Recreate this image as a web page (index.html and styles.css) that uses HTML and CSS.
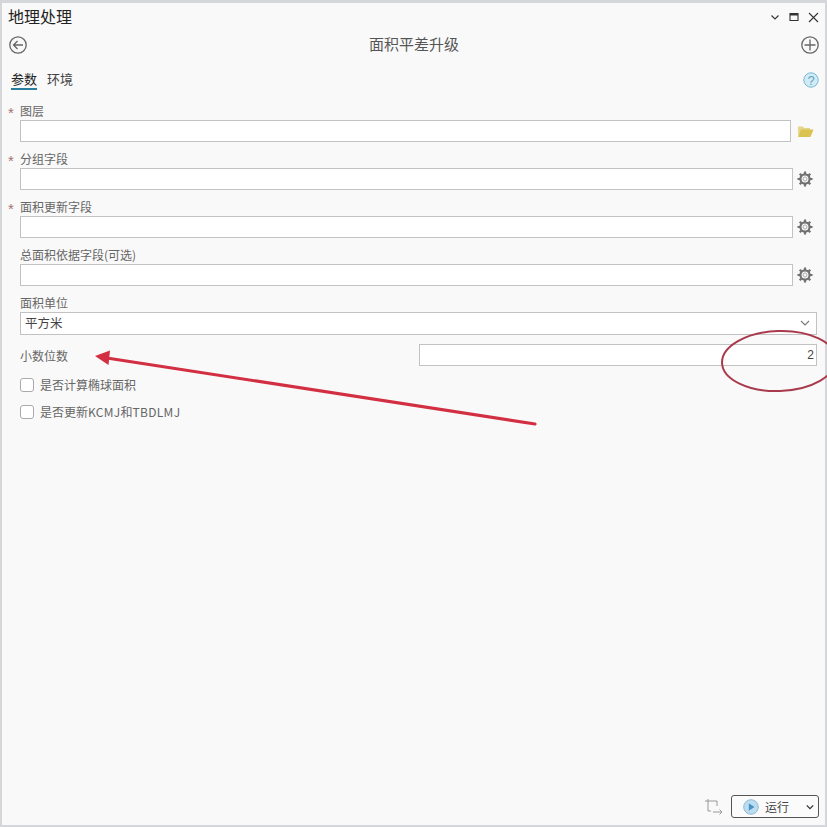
FILE: index.html
```html
<!DOCTYPE html>
<html lang="zh">
<head>
<meta charset="utf-8">
<title>地理处理</title>
<link rel="stylesheet" href="styles.css">
</head>
<body>
<div class="panel">
  <header class="titlebar">
    <span class="title">地理处理</span>
    <div class="winctl">
      <svg width="10" height="10" viewBox="0 0 10 10"><path d="M1.500 3.500 5 7l3.500-3.500" class="st1"/></svg>
      <svg width="10" height="10" viewBox="0 0 10 10"><path d="M1 1.500h8v7H1z" class="st1"/><path d="M1 2.500h8" class="st2"/></svg>
      <svg width="11" height="11" viewBox="0 0 11 11"><path d="M1 1l9 9M10 1l-9 9" class="st1"/></svg>
    </div>
  </header>
  <div class="toolhead">
    <svg width="18" height="18" viewBox="0 0 18 18"><circle cx="9" cy="9" r="8.200" class="st3"/><path d="M14 9H4.500M8.500 5 4.500 9l4 4" class="st3"/></svg>
    <span class="toolname">面积平差升级</span>
    <svg width="18" height="18" viewBox="0 0 18 18"><circle cx="9" cy="9" r="8.200" class="st3"/><path d="M9 3.500v11M3.500 9h11" class="st3"/></svg>
  </div>
  <nav class="tabs">
    <span class="tab active">参数</span>
    <span class="tab">环境</span>
    <svg class="help" width="16" height="16" viewBox="0 0 16 16"><circle cx="8" cy="8" r="7.200" fill="#d3ebf5" stroke="#76b9d6"/><text x="8" y="12.500" class="helpq">?</text></svg>
  </nav>
  <main class="form">
    <div class="field">
      <label class="label req">图层</label>
      <div class="row">
        <div class="input folder-input"></div>
        <svg class="side" width="17" height="14" viewBox="0 0 17 14"><path d="M1 12V2.500h5l1 1.500h6V6H4z" fill="#e6d68c"/><path d="M1 13 3.800 5.500H16.500L13.500 13z" fill="#dcc24f"/></svg>
      </div>
    </div>
    <div class="field">
      <label class="label req">分组字段</label>
      <div class="row">
        <div class="input"></div>
        <svg class="side gear" width="16" height="16" viewBox="0 0 16 16"><use href="#gear"/></svg>
      </div>
    </div>
    <div class="field">
      <label class="label req">面积更新字段</label>
      <div class="row">
        <div class="input"></div>
        <svg class="side gear" width="16" height="16" viewBox="0 0 16 16"><use href="#gear"/></svg>
      </div>
    </div>
    <div class="field">
      <label class="label">总面积依据字段(可选)</label>
      <div class="row">
        <div class="input"></div>
        <svg class="side gear" width="16" height="16" viewBox="0 0 16 16"><use href="#gear"/></svg>
      </div>
    </div>
    <div class="field">
      <label class="label">面积单位</label>
      <div class="input select">
        <span>平方米</span>
        <svg width="10" height="10" viewBox="0 0 10 10"><path d="M1 3l4 4 4-4" class="st4"/></svg>
      </div>
    </div>
    <div class="decimal">
      <label class="dlabel">小数位数</label>
      <div class="input num">2</div>
    </div>
    <div class="check"><span class="box"></span><span>是否计算椭球面积</span></div>
    <div class="check"><span class="box"></span><span>是否更新<span class="latin">KCMJ</span>和<span class="latin">TBDLMJ</span></span></div>
  </main>
  <footer class="foot">
    <svg width="20" height="18" viewBox="0 0 20 18"><path d="M1 3h12M4 1v12h3M13 3v5M9 14h9M15.500 11.500 18 14l-2.500 2.500" class="st5"/></svg>
    <div class="run">
      <svg width="16" height="16" viewBox="0 0 16 16"><circle cx="8" cy="8" r="7.300" fill="#bcdcf0" stroke="#8ebbd6"/><path d="M5.800 4.300v7.400L11.500 8z" fill="#4a93c4"/></svg>
      <span class="runtxt">运行</span>
      <svg class="runcaret" width="8" height="8" viewBox="0 0 10 10"><path d="M1 3l4 4 4-4" class="st6"/></svg>
    </div>
  </footer>
  <svg class="marks" width="827" height="827" viewBox="0 0 827 827">
    <ellipse cx="779" cy="361" rx="57" ry="30" transform="rotate(-2 779 361)" fill="none" stroke="#a83a4c" stroke-width="2"/>
    <path d="M535 424 110 358.500" stroke="#d32f42" stroke-width="3.200" stroke-linecap="round" fill="none"/>
    <path d="M95 356 110 350.500 108.500 365z" fill="#d32f42"/>
  </svg>
  <svg width="0" height="0" class="defs"><defs>
    <g id="gear"><circle cx="8" cy="8" r="4.600" fill="none" stroke="#707070" stroke-width="2.200"/><circle cx="8" cy="8" r="2" fill="none" stroke="#aaa"/><path d="M8 .5v3M8 12.500v3M.5 8h3M12.500 8h3M2.700 2.700l2.100 2.100M11.200 11.200l2.100 2.100M13.300 2.700l-2.100 2.100M4.800 11.200l-2.100 2.100" stroke="#707070" stroke-width="2.200"/></g>
  </defs></svg>
</div>
</body>
</html>
```
FILE: styles.css
```css
* { box-sizing: border-box; }
html, body { margin: 0; padding: 0; }
body { width: 827px; height: 827px; overflow: hidden; font-family: "Noto Sans CJK SC", "Liberation Sans", sans-serif; color: #333; }
.panel { position: relative; width: 827px; height: 827px; background: #f9f9f9; border: solid #d5d6da; border-width: 3px 2px 2px 2px; display: flex; flex-direction: column; }
.titlebar { height: 28px; display: flex; align-items: center; justify-content: space-between; padding: 0 6px 2px 6px; }
.title { font-size: 16px; color: #222; line-height: 22px; }
.winctl { display: flex; align-items: center; gap: 9px; padding-top: 2px; }
.st1 { fill: none; stroke: #333; stroke-width: 1.100; }
.st2 { fill: none; stroke: #333; stroke-width: 2; }
.st3 { fill: none; stroke: #666; stroke-width: 1.300; }
.st4 { fill: none; stroke: #777; stroke-width: 1.100; }
.st5 { fill: none; stroke: #999; stroke-width: 1; }
.st6 { fill: none; stroke: #333; stroke-width: 1.600; }
.toolhead { height: 20px; margin-top: 4px; display: flex; align-items: center; justify-content: space-between; padding: 0 6px 0 7px; }
.toolname { font-size: 15px; line-height: 20px; margin-bottom: 3px; color: #555; }
.tabs { position: relative; display: flex; gap: 10px; margin-top: 14px; padding-left: 9px; height: 35px; }
.tab { font-size: 13px; line-height: 20px; height: 20px; color: #444; }
.tab.active { color: #222; border-bottom: 2px solid #2a7f9e; height: 21px; width: 26px; }
.help { position: absolute; right: 6px; top: 3px; }
.helpq { font: 13px "Liberation Sans", sans-serif; fill: #5aa6c9; text-anchor: middle; }
.form { padding: 0 8px 0 18px; display: flex; flex-direction: column; flex: 1; }
.field { height: 48px; display: flex; flex-direction: column; }
.label { position: relative; font-size: 12px; line-height: 14px; height: 16px; color: #666; }
.label.req::before { content: "*"; position: absolute; left: -12px; top: 0; color: #a8716e; font: 15px "Liberation Sans", sans-serif; }
.row { display: flex; align-items: center; gap: 5px; }
.input { flex: 1; height: 22px; background: #fff; border: 1px solid #c2c2c2; }
.folder-input { margin-right: 1px; }
.side { flex: none; margin-right: 3px; }
.gear { margin-left: -1px; margin-right: 4px; }
.select { flex: none; height: 23px; padding: 0 6px 2px 4px; display: flex; align-items: center; justify-content: space-between; font-size: 12.500px; color: #444; }
.decimal { display: flex; align-items: center; justify-content: space-between; height: 22px; }
.dlabel { font-size: 12px; color: #666; }
.num { flex: none; width: 398px; text-align: right; font-size: 12px; line-height: 20px; padding-right: 2px; color: #444; font-family: "Liberation Sans", sans-serif; }
.check { display: flex; align-items: center; gap: 6px; height: 27px; font-size: 12px; color: #666; }
.latin { letter-spacing: 0.300px; }
.decimal + .check { margin-top: 5px; }
.box { width: 14px; height: 14px; background: #fff; border: 1px solid #aaa; border-radius: 3px; }
.foot { display: flex; justify-content: flex-end; align-items: center; gap: 7px; height: 23px; margin-bottom: 7px; padding-right: 6px; }
.run { position: relative; width: 88px; height: 23px; background: #fbfbfb; border: 1px solid #555; border-radius: 3px; display: flex; align-items: center; padding-left: 11px; gap: 6px; font-size: 12px; color: #444; }
.runcaret { position: absolute; right: 4px; top: 7px; }
.marks { position: absolute; left: -2px; top: -3px; pointer-events: none; }
.defs { position: absolute; }
```
